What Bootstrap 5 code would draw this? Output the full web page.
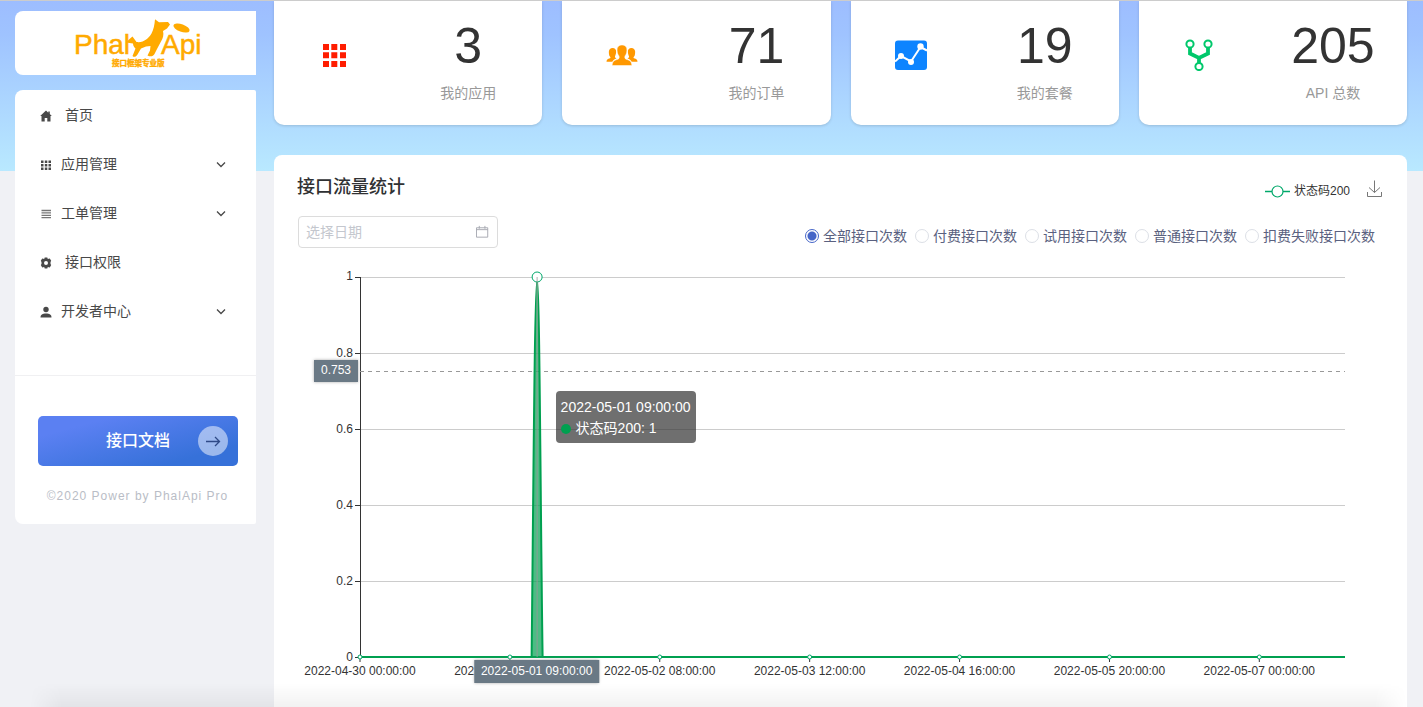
<!DOCTYPE html>
<html lang="zh-CN">
<head>
<meta charset="utf-8">
<meta name="viewport" content="width=device-width, initial-scale=1">
<title>PhalApi Pro</title>
<link href="https://cdn.jsdelivr.net/npm/bootstrap@5.3.0/dist/css/bootstrap.min.css" rel="stylesheet">
<style>
  body {
    font-family: "Liberation Sans", "Noto Sans CJK SC", sans-serif;
    font-size: 14px;
    line-height: 20px;
    color: #303133;
    background: linear-gradient(#9dbdff, #9fc3ff 20%, #b9e9ff) 0 0 / 100% 171px no-repeat #f0f1f5;
  }
  .page { border-top: 1px solid #ccc; }
  .page::after {
    content: "";
    position: fixed;
    left: 30px; right: 16px; bottom: 0;
    height: 24px;
    background: linear-gradient(rgba(0,0,0,0), rgba(0,0,0,.05));
    -webkit-mask-image: linear-gradient(90deg, transparent, #000 32px, #000 calc(100% - 32px), transparent);
    mask-image: linear-gradient(90deg, transparent, #000 32px, #000 calc(100% - 32px), transparent);
    pointer-events: none;
  }
  .side { width: 256px; padding: 10px 0 0 15px; }
  .side-logo { height: 64px; border-radius: 8px 0 0 8px; margin-bottom: 15px; padding-left: 7px; }
  .side-box { border-radius: 8px 2px 2px 8px; }
  .side-nav { padding-bottom: 40px; border-bottom: 1px solid #f0f0f2; }
  .side-nav a { height: 49px; padding: 0 30px 0 25px; color: #484848; }
  .side-nav svg { flex: none; margin-top: 3px; }
  .side-nav .label-near { margin-left: 9px; }
  .side-nav .label-far { margin-left: 13px; }
  .doc-btn {
    width: 200px; height: 50px; padding: 0 10px 0 68px; margin: 40px auto 20px 23px;
    border: 0; border-radius: 5px; color: #fff; font-size: 16px; font-weight: 500;
    background: linear-gradient(165deg, #5b80f2 20%, #3671d9 80%);
  }
  .doc-btn span { width: 30px; height: 30px; background: rgba(255,255,255,.5); }
  .copyright { font-size: 12px; letter-spacing: 1px; color: #b9bdc6; padding: 0 0 18px 4px; }
  .main { padding: 0 16px 0 18px; min-width: 0; }
  .stats { --bs-gutter-x: 20px; margin-bottom: 30px; }
  .stat { height: 124px; border-radius: 0 0 10px 10px; box-shadow: 0 1px 3px rgba(0,0,0,.15); }
  .stat > div { padding-right: 14px; padding-left: 0; }
  .stat .pic { padding-top: 38px; }
  .stat .num { font-size: 50px; line-height: 60px; padding-top: 15px; color: #333; }
  .stat .cap { color: #999; padding-top: 7px; }
  .panel { border-radius: 8px 8px 0 0; padding: 16px 25px 0 24px; }
  .panel h1 { font-size: 18px; line-height: 32px; font-weight: 500; margin: 0 0 13px -1px; }
  .legend-bar { font-size: 12px; color: #333; padding-top: 10px; }
  .legend-bar svg { flex: none; }
  .icon-btn { border: 0; background: none; padding: 0; line-height: 0; margin-left: 16px; margin-top: -5px; }
  .date-box { width: 200px; height: 32px; border: 1px solid #dcdcdc; border-radius: 4px; padding: 0 8px 0 7px; }
  .date-box input { border: 0; outline: 0; padding: 0; min-width: 0; background: none; }
  .date-box input::placeholder { color: #c4c7ce; opacity: 1; }
  .kinds { gap: 8px; padding-right: 7px; color: #5a6180; }
  .kinds label { gap: 4px; height: 24px; }
  .kinds input {
    appearance: none; width: 14px; height: 14px; margin: 0;
    border: 1px solid #dcdfe6; border-radius: 50%; background: #fff;
  }
  .kinds input:checked { border-color: #4666c8; background: radial-gradient(circle, #4666c8 4px, #fff 5px); }
  .plot { height: 420px; margin: 29px 37px 0 62px; }
  .plot > svg { width: 100%; height: 380px; overflow: visible; font-size: 12px; fill: #333; }
  .tip { left: 17.93%; top: 114px; margin-left: 19px; padding: 6px 5px 4px; width: 140px; height: 52px;
    line-height: 21px; color: #fff; background: rgba(50,50,50,.7); border-radius: 4px; white-space: nowrap; }
  .tip i { width: 10px; height: 10px; background: #00a050; margin-right: 5px; }
  .flag { font-size: 12px; line-height: 13px; color: #fff; background: #6a7985; padding: 4px 7px 5px; box-shadow: 0 0 3px #aaa; white-space: nowrap; }
  .flag-y { right: 100%; top: 83px; margin-right: 2px; }
  .flag-x { left: 17.93%; top: 383px; transform: translateX(-50%); padding-top: 5px; }
</style>
</head>
<body>
<div class="page d-flex min-vh-100 overflow-hidden">

  <aside class="side flex-shrink-0">
    <div class="side-logo bg-white d-flex align-items-center justify-content-center">
      <svg width="128" height="51" viewBox="75 18 128 51" fill="#ffaa00" role="img" aria-label="PhalApi">
        <g font-size="28" stroke="#ffaa00" stroke-width=".5"><text x="74" y="54">Phal</text><text x="161" y="54">Api</text></g>
        <path d="M155 19.300l4 3 9-.3 2 2.500-3 4-4 2.500c1 4 0 7-2 10.500l-4 7.500-2.500 5c-1.500 2.500-4 3-7 1.500l2.500-5 .5-4.500-4.500.5-5 2-3.500 6c-1.500 2.500-3.500 3-5 1.500l3-7.500c-1-1-2.500-2.500-2.500-5l-7-1 3.500-3.500 3-2.500 4 5.500c7 1 12-3.500 15-8.500 2-4 3-8 3.500-14.200z"/>
        <ellipse cx="181.500" cy="28" rx="8.500" ry="3.800" transform="rotate(20 181.500 28)"/>
        <text x="112" y="66" font-size="7.500" font-weight="700" stroke="#ffaa00" stroke-width=".4">接口框架专业版</text>
      </svg>
    </div>

    <div class="side-box bg-white">
      <nav class="side-nav d-flex flex-column">
        <a class="d-flex align-items-center text-decoration-none" href="#">
          <svg width="12" height="12" viewBox="0 0 12 12" fill="#484848"><path d="M6 .5.200 6H1.500v5.500h3.200V8h2.600v3.500h3.200V6h1.300L9.800 4.100V1.500H8.300v1.200z"/></svg>
          <span class="label-far">首页</span>
        </a>
        <a class="d-flex align-items-center text-decoration-none" href="#">
          <svg width="12" height="12" viewBox="0 0 12 12" fill="#484848"><path d="M1 1.500h2.500V4H1zM4.800 1.500h2.500V4H4.800zM8.500 1.500H11V4H8.500zM1 5h2.500v2.500H1zM4.800 5h2.500v2.500H4.800zM8.500 5H11v2.500H8.500zM1 8.500h2.500V11H1zM4.800 8.500h2.500V11H4.800zM8.500 8.500H11V11H8.500z"/></svg>
          <span class="label-near">应用管理</span>
          <svg class="ms-auto" width="10" height="8" viewBox="0 0 10 8" fill="none" stroke="#484848" stroke-width="1.300"><path d="M1 1.500l4 4 4-4"/></svg>
        </a>
        <a class="d-flex align-items-center text-decoration-none" href="#">
          <svg width="12" height="12" viewBox="0 0 12 12" stroke="#777" stroke-width="1.300"><path d="M1.500 2.500h9.500M1.500 4.900h9.500M1.500 7.300h9.500M1.500 9.700h9.500"/></svg>
          <span class="label-near">工单管理</span>
          <svg class="ms-auto" width="10" height="8" viewBox="0 0 10 8" fill="none" stroke="#484848" stroke-width="1.300"><path d="M1 1.500l4 4 4-4"/></svg>
        </a>
        <a class="d-flex align-items-center text-decoration-none" href="#">
          <svg width="12" height="12" viewBox="0 0 12 12" fill="#484848"><path fill-rule="evenodd" d="M4.700.5h2.600l.5 1.400 2-.3 1.400 2.200-.7 1.300v1.800l.7 1.200-1.400 2.300-2-.3-.5 1.400H4.700l-.5-1.400-2 .3L.8 8.100l.7-1.200V5.100L.8 3.800l1.400-2.200 2 .3zM6 4a2 2 0 1 0 0 4 2 2 0 0 0 0-4z"/></svg>
          <span class="label-far">接口权限</span>
        </a>
        <a class="d-flex align-items-center text-decoration-none" href="#">
          <svg width="12" height="12" viewBox="0 0 12 12" fill="#484848"><circle cx="6" cy="3.500" r="2.700"/><path d="M.5 11.500c0-3 2-4 5.500-4s5.500 1 5.500 4z"/></svg>
          <span class="label-near">开发者中心</span>
          <svg class="ms-auto" width="10" height="8" viewBox="0 0 10 8" fill="none" stroke="#484848" stroke-width="1.300"><path d="M1 1.500l4 4 4-4"/></svg>
        </a>
      </nav>
      <button type="button" class="doc-btn d-flex align-items-center justify-content-between">
        接口文档
        <span class="rounded-circle d-flex align-items-center justify-content-center">
          <svg width="16" height="12" viewBox="0 0 16 12" fill="none" stroke="#2f4a87" stroke-width="1.300"><path d="M1 6.500h13.500M10 2l4.500 4.500L10 11"/></svg>
        </span>
      </button>
      <div class="copyright text-center">©2020 Power by PhalApi Pro</div>
    </div>
  </aside>

  <main class="main flex-grow-1 d-flex flex-column">
    <div class="row stats">
      <div class="col-3"><div class="stat bg-white row g-0 text-center">
        <div class="col-6 pic"><svg width="32" height="32" viewBox="0 0 32 32" fill="#ff1d00"><path d="M5 5h6v6H5zM13.300 5h6v6h-6zM22 5h6v6h-6zM5 13.300h6v6H5zM13.300 13.300h6v6h-6zM22 13.300h6v6h-6zM5 22h6v6H5zM13.300 22h6v6h-6zM22 22h6v6h-6z"/></svg></div>
        <div class="col-6"><div class="num">3</div><div class="cap">我的应用</div></div>
      </div></div>
      <div class="col-3"><div class="stat bg-white row g-0 text-center">
        <div class="col-6 pic"><svg width="32" height="32" viewBox="0 0 32 32" fill="#ff9800"><g id="man"><path d="M6.500 9c2.500 0 4 1.600 3.600 4.500-.2 2-.8 3-1.100 3.800-.2 1 .3 1.600 1.500 2.200-2 .7-3.500 1.800-4.200 3.200H.5c0-2 1-2.700 3.500-3.400.7-.3.6-1 .1-1.600-1.300-1-1.300-4.200-1.200-5.500C3.100 10.300 4.500 9 6.500 9z"/></g><use href="#man" transform="matrix(-1 0 0 1 32 0)"/><path d="M16 6c3.500 0 5.200 2.300 4.900 5.500-.1 2.500-.8 4-1.700 5.200-.8 1.200-.4 3 .8 3.500 3.400 1 5.600 1.800 5.900 6.300H6.100c.3-4.500 2.500-5.300 5.900-6.300 1.200-.5 1.600-2.300.8-3.500-.9-1.200-1.600-2.700-1.700-5.200C10.800 8.300 12.500 6 16 6z" stroke="#fff" stroke-width=".5"/></svg></div>
        <div class="col-6"><div class="num">71</div><div class="cap">我的订单</div></div>
      </div></div>
      <div class="col-3"><div class="stat bg-white row g-0 text-center">
        <div class="col-6 pic"><svg width="32" height="32" viewBox="0 0 32 32"><rect y="1.500" width="32" height="29.500" rx="3" fill="#0d84ff"/><path d="M0 22.500L6 17l10 5.500L25.500 8l6.500 3.500" fill="none" stroke="#fff" stroke-width="2"/><g fill="#fff"><circle cx="6" cy="17" r="3"/><circle cx="16" cy="23" r="3"/><circle cx="25.500" cy="7.500" r="3.200"/></g></svg></div>
        <div class="col-6"><div class="num">19</div><div class="cap">我的套餐</div></div>
      </div></div>
      <div class="col-3"><div class="stat bg-white row g-0 text-center">
        <div class="col-6 pic"><svg width="32" height="32" viewBox="0 0 32 32" fill="none" stroke="#00c86b"><path d="M7 8v6.500l9 4.500 9-4.500V8M16 17v7" stroke-width="3.800"/><g fill="#fff" stroke-width="2"><circle cx="7" cy="5" r="3.600"/><circle cx="25" cy="5" r="3.600"/><circle cx="16" cy="27.500" r="3.600"/></g></svg></div>
        <div class="col-6"><div class="num">205</div><div class="cap">API 总数</div></div>
      </div></div>
    </div>

    <section class="panel bg-white flex-grow-1">
      <div class="d-flex justify-content-between align-items-start">
        <h1>接口流量统计</h1>
        <div class="legend-bar d-flex align-items-center">
          <svg width="25" height="14" viewBox="0 0 25 14" fill="#fff" stroke="#00a86a"><path d="M0 7.500h25" stroke-width="1.500"/><circle cx="12.500" cy="7.500" r="5.500" stroke-width="1.200"/></svg>
          <span class="ms-1">状态码200</span>
          <button type="button" class="icon-btn" aria-label="下载"><svg width="16" height="18" viewBox="0 0 16 18" fill="none" stroke="#777"><path d="M8.500.5v12M3 7.500l5.500 5 5.500-5M1.500 12v4.500h14V12"/></svg></button>
        </div>
      </div>
      <div class="d-flex justify-content-between align-items-end">
        <div class="date-box d-flex align-items-center">
          <input class="flex-grow-1" type="text" placeholder="选择日期" aria-label="选择日期">
          <svg width="14" height="14" viewBox="0 0 14 14" fill="none" stroke="#a5a8b0"><path d="M.5 2.500h12v10H.5zM.5 4.500h12M3.500.5v3M9.500.5v3"/></svg>
        </div>
        <div class="kinds d-flex">
          <label class="d-flex align-items-center"><input type="radio" name="kind" checked>全部接口次数</label>
          <label class="d-flex align-items-center"><input type="radio" name="kind">付费接口次数</label>
          <label class="d-flex align-items-center"><input type="radio" name="kind">试用接口次数</label>
          <label class="d-flex align-items-center"><input type="radio" name="kind">普通接口次数</label>
          <label class="d-flex align-items-center"><input type="radio" name="kind">扣费失败接口次数</label>
        </div>
      </div>

      <div class="plot position-relative">
        <svg>
          <g stroke="#ccc" shape-rendering="crispEdges">
            <line x2="100%" y1="0.500" y2="0.500"/><line x2="100%" y1="76.500" y2="76.500"/><line x2="100%" y1="152.500" y2="152.500"/><line x2="100%" y1="228.500" y2="228.500"/><line x2="100%" y1="304.500" y2="304.500"/>
          </g>
          <path stroke="#333" shape-rendering="crispEdges" d="M.5 0v381M-5 .5h5M-5 76.500h5M-5 152.500h5M-5 228.500h5M-5 304.500h5M-5 380.500h5"/>
          <g text-anchor="end">
            <text x="-7" y="3">1</text><text x="-7" y="80">0.8</text><text x="-7" y="156">0.6</text><text x="-7" y="232">0.4</text><text x="-7" y="308">0.2</text><text x="-7" y="384">0</text>
          </g>
          <g stroke="#333">
            <line x1="0" x2="0" y1="380" y2="385"/><line x1="15.220%" x2="15.220%" y1="380" y2="385"/><line x1="30.430%" x2="30.430%" y1="380" y2="385"/><line x1="45.650%" x2="45.650%" y1="380" y2="385"/><line x1="60.870%" x2="60.870%" y1="380" y2="385"/><line x1="76.090%" x2="76.090%" y1="380" y2="385"/><line x1="91.300%" x2="91.300%" y1="380" y2="385"/>
          </g>
          <g text-anchor="middle">
            <text x="0" y="398">2022-04-30 00:00:00</text><text x="15.220%" y="398">2022-05-01 04:00:00</text><text x="30.430%" y="398">2022-05-02 08:00:00</text><text x="45.650%" y="398">2022-05-03 12:00:00</text><text x="60.870%" y="398">2022-05-04 16:00:00</text><text x="76.090%" y="398">2022-05-05 20:00:00</text><text x="91.300%" y="398">2022-05-07 00:00:00</text>
          </g>
          <line x2="100%" y1="380" y2="380" stroke="#00a050" stroke-width="2"/>
          <line x2="100%" y1="94.500" y2="94.500" stroke="#999" stroke-dasharray="4 4" shape-rendering="crispEdges"/>
          <svg x="17.930%" overflow="visible">
            <path d="M-5 380C-3.500 250-2 3 .5 3S4 250 6 380z" fill="#00a050" fill-opacity=".7" stroke="#00a050" stroke-width="2"/>
            <circle cx=".5" r="5" fill="#fff" stroke="#00a86a"/>
            <path d="M.5 0v380" stroke="#999" stroke-opacity=".8"/>
          </svg>
          <g fill="#fff" stroke="#00a86a">
            <circle cx="0" cy="380" r="2"/><circle cx="15.220%" cy="380" r="2"/><circle cx="30.430%" cy="380" r="2"/><circle cx="45.650%" cy="380" r="2"/><circle cx="60.870%" cy="380" r="2"/><circle cx="76.090%" cy="380" r="2"/><circle cx="91.300%" cy="380" r="2"/>
          </g>
        </svg>
        <div class="flag flag-y position-absolute">0.753</div>
        <div class="flag flag-x position-absolute">2022-05-01 09:00:00</div>
        <div class="tip position-absolute">
          <div>2022-05-01 09:00:00</div>
          <div class="d-flex align-items-center"><i class="rounded-circle"></i>状态码200: 1</div>
        </div>
      </div>
    </section>
  </main>
</div>
<script src="https://cdn.jsdelivr.net/npm/bootstrap@5.3.0/dist/js/bootstrap.bundle.min.js"></script>
</body>
</html>
